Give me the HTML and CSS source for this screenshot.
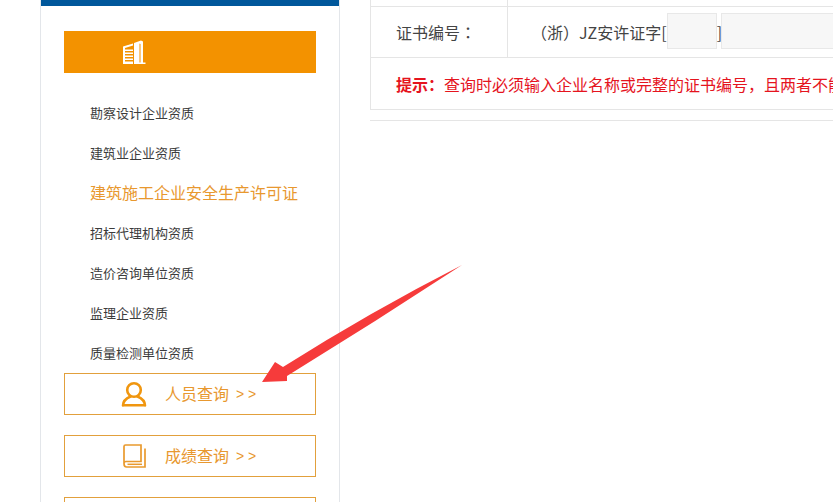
FILE: index.html
```html
<!DOCTYPE html>
<html lang="zh-CN">
<head>
<meta charset="utf-8">
<title>建筑施工企业安全生产许可证</title>
<link rel="stylesheet" href="styles.css">
</head>
<body>
<div class="page">
  <aside class="sidebar">
    <div class="topbar"></div>
    <div class="head">
      <svg class="head-icon" viewBox="0 0 24 24" width="24" height="24">
        <path fill="#fff" d="M1 6.500 11 3.500V5.500L3 8V9.500H11V11H3V12.500H11V14H3V15.500H11V17H3V18.500H11V20H3V21.500H11V24H1Z"/>
        <path fill="#fff" d="M12 3 19 .5 21 1.500V22.500H23.500V24H12Z"/>
        <path fill="#f39200" d="M17.500 3.500 18.500 4V22.500H17.500Z"/>
      </svg>
    </div>
    <ul class="menu">
      <li>勘察设计企业资质</li>
      <li>建筑业企业资质</li>
      <li class="active">建筑施工企业安全生产许可证</li>
      <li>招标代理机构资质</li>
      <li>造价咨询单位资质</li>
      <li>监理企业资质</li>
      <li>质量检测单位资质</li>
    </ul>
    <div class="btn">
      <svg class="btn-icon" viewBox="0 0 26 26" width="26" height="26">
        <circle cx="13" cy="9" r="6.800" fill="none" stroke="#f0960f" stroke-width="2.600"/>
        <path d="M2 24.500C2 20 6 17 9.500 15.500M24 24.500C24 20 20 17 16.500 15.500M2 24.200H24" fill="none" stroke="#f0960f" stroke-width="2.600" stroke-linecap="round"/>
      </svg>
      <span class="btn-text">人员查询</span><span class="btn-arrows">&gt; &gt;</span>
    </div>
    <div class="btn">
      <svg class="btn-icon" viewBox="0 0 26 26" width="26" height="26">
        <path d="M3 20.500V3.500Q3 2 4.500 2H20V18.500H5Q3 18.500 3 20.500Q3 24 5.500 24H24V5.500" fill="none" stroke="#e99a2e" stroke-width="1.700"/>
        <path d="M6.500 21.300H21" fill="none" stroke="#e99a2e" stroke-width="1.500"/>
      </svg>
      <span class="btn-text">成绩查询</span><span class="btn-arrows">&gt; &gt;</span>
    </div>
    <div class="btn"></div>
  </aside>
  <main class="main">
    <div class="panel">
      <div class="row row-top"><div class="label"></div><div class="value"></div></div>
      <div class="row row-cert">
        <div class="label">证书编号<span class="punc">：</span></div>
        <div class="value"><span class="paren">（</span>浙<span class="paren">）</span>JZ安许证字[<span class="field field-short"></span>]<span class="field field-long"></span></div>
      </div>
      <div class="row row-note">
        <p class="note"><strong>提示<span class="punc">：</span></strong>查询时必须输入企业名称或完整的证书编号<span class="punc">，</span>且两者不能同时为空<span class="punc">。</span></p>
      </div>
    </div>
    <div class="rule"></div>
  </main>
</div>
<svg class="arrow" viewBox="0 0 833 502" width="833" height="502">
  <path fill="#f63b3b" d="M262 382 275 362 283 367Q370 312 462 265Q375 322 287 376L287 381Z"/>
</svg>
</body>
</html>
```
FILE: styles.css
```css
html, body {
  margin: 0;
  padding: 0;
  height: 502px;
  overflow: hidden;
  background: #fff;
}
body {
  position: relative;
  font-family: "Noto Sans CJK SC", "Liberation Sans", sans-serif;
  color: #333;
  text-spacing-trim: space-all;
}
.page {
  display: flex;
  width: 1300px;
  padding-left: 40px;
  box-sizing: border-box;
}
.sidebar {
  width: 300px;
  height: 560px;
  flex: none;
  box-sizing: border-box;
  border-left: 1px solid #e3e6ea;
  border-right: 1px solid #e3e6ea;
}
.topbar {
  height: 6px;
  background: #00579b;
}
.head {
  margin: 25px 23px 20px;
  height: 42px;
  background: #f39200;
  display: flex;
  align-items: center;
  padding-left: 58px;
  box-sizing: border-box;
  width: 252px;
}
.head-icon { display: block; }
.menu {
  list-style: none;
  margin: 0;
  padding: 0 0 0 49px;
}
.menu li {
  height: 40px;
  line-height: 39px;
  font-size: 13px;
  color: #3c3c3c;
  white-space: nowrap;
}
.menu li.active {
  font-size: 16px;
  color: #e8982f;
}
.btn {
  margin: 0 0 20px 23px;
  width: 252px;
  height: 42px;
  box-sizing: border-box;
  border: 1px solid #e2a03c;
  display: flex;
  align-items: center;
  padding-left: 56px;
  color: #e8982f;
  font-size: 16px;
}
.btn-icon { display: block; flex: none; }
.btn-text {
  margin-left: 18px;
  position: relative;
  top: -1px;
}
.btn-arrows {
  margin-left: 7px;
  font-size: 14px;
  font-family: "Liberation Sans", sans-serif;
}
.main {
  margin-left: 30px;
  width: 900px;
  flex: none;
}
.panel {
  border-left: 1px solid #e5e5e5;
  border-bottom: 1px solid #e5e5e5;
}
.row {
  display: flex;
  box-sizing: border-box;
  border-bottom: 1px solid #e5e5e5;
  font-size: 16px;
  color: #444;
}
.row-top { height: 7px; }
.row-cert { height: 51px; }
.row-note {
  height: 51px;
  border-bottom: 0;
  align-items: center;
  padding-left: 25px;
}
.label {
  width: 137px;
  flex: none;
  box-sizing: border-box;
  padding-left: 25px;
  border-right: 1px solid #e5e5e5;
  display: flex;
  align-items: center;
}
.value {
  flex: 1;
  display: flex;
  align-items: center;
  padding-left: 23px;
  white-space: nowrap;
}
.paren {
  display: block;
  width: 16px;
  text-align: center;
}
.field {
  display: block;
  box-sizing: border-box;
  height: 36px;
  margin-bottom: 2px;
  background: #f7f7f7;
  border: 1px solid #e8e8e8;
}
.field-short { width: 50px; }
.field-long { width: 200px; margin-left: -1px; }
.punc { font-family: "Noto Sans CJK TC", sans-serif; }
.note {
  margin: 0;
  font-size: 16px;
  color: #e5141e;
  white-space: nowrap;
}
.note strong { font-weight: 700; }
.rule {
  margin-top: 10px;
  height: 1px;
  background: #e5e5e5;
}
.arrow {
  position: absolute;
  left: 0;
  top: 0;
  pointer-events: none;
}
```
